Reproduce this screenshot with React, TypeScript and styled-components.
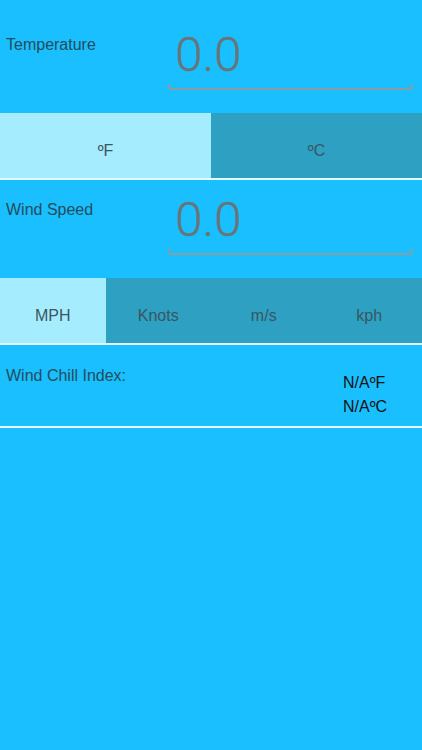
import React from "react";
import styled, { createGlobalStyle } from "styled-components";

const GlobalStyle = createGlobalStyle`
  html, body {
    margin: 0;
    padding: 0;
    background: #1abfff;
  }
  body {
    font-family: "Liberation Sans", Arial, sans-serif;
  }
`;

const Screen = styled.div`
  width: 422px;
  min-height: 750px;
  background: #1abfff;
  display: flex;
  flex-direction: column;
`;

const InputRow = styled.div<{ $top?: number }>`
  display: grid;
  grid-template-columns: 168px 245px;
  height: 98px;
  padding-top: ${(p) => p.$top || 0}px;
  box-sizing: content-box;
`;

const Label = styled.div`
  font-size: 16px;
  line-height: 20px;
  color: #234c5c;
  padding: 20px 0 0 6px;
`;

const Field = styled.div`
  display: flex;
  flex-direction: column;
`;

const Value = styled.div`
  font-family: Roboto, "Liberation Sans", sans-serif;
  font-weight: 300;
  font-size: 49px;
  line-height: 49px;
  height: 54px;
  padding: 15px 0 0 7px;
  color: #697478;
  -webkit-text-stroke: 0.4px #697478;
`;

const Underline = styled.div`
  height: 4px;
  border: 2px solid #8a9ca4;
  border-top: none;
  border-radius: 0 0 4px 4px;
`;

const Segments = styled.div<{ $count: number }>`
  display: grid;
  grid-template-columns: repeat(${(p) => p.$count}, 1fr);
  height: 65px;
  border-bottom: 2px solid #e6f8ff;
`;

const Segment = styled.div<{ $active?: boolean }>`
  background: ${(p) => (p.$active ? "#a6ecff" : "#2ea0c1")};
  color: #3a5661;
  font-size: 16px;
  line-height: 20px;
  text-align: center;
  padding-top: 28px;
`;

const ResultRow = styled.div`
  display: grid;
  grid-template-columns: 343px 1fr;
  height: 81px;
  border-bottom: 2px solid #e6f8ff;
`;

const ResultLabel = styled(Label)`
  padding-top: 21px;
`;

const ResultValues = styled.div`
  padding-top: 26px;
  font-size: 16px;
  line-height: 24px;
  color: #111;
`;

const speedUnits = ["MPH", "Knots", "m/s", "kph"];

export default function App() {
  return (
    <Screen>
      <GlobalStyle />
      <InputRow $top={15}>
        <Label>Temperature</Label>
        <Field>
          <Value>0.0</Value>
          <Underline />
        </Field>
      </InputRow>
      <Segments $count={2}>
        <Segment $active>ºF</Segment>
        <Segment>ºC</Segment>
      </Segments>
      <InputRow>
        <Label>Wind Speed</Label>
        <Field>
          <Value>0.0</Value>
          <Underline />
        </Field>
      </InputRow>
      <Segments $count={4}>
        {speedUnits.map((u, i) => (
          <Segment key={u} $active={i === 0}>
            {u}
          </Segment>
        ))}
      </Segments>
      <ResultRow>
        <ResultLabel>Wind Chill Index:</ResultLabel>
        <ResultValues>
          <div>N/AºF</div>
          <div>N/AºC</div>
        </ResultValues>
      </ResultRow>
    </Screen>
  );
}
